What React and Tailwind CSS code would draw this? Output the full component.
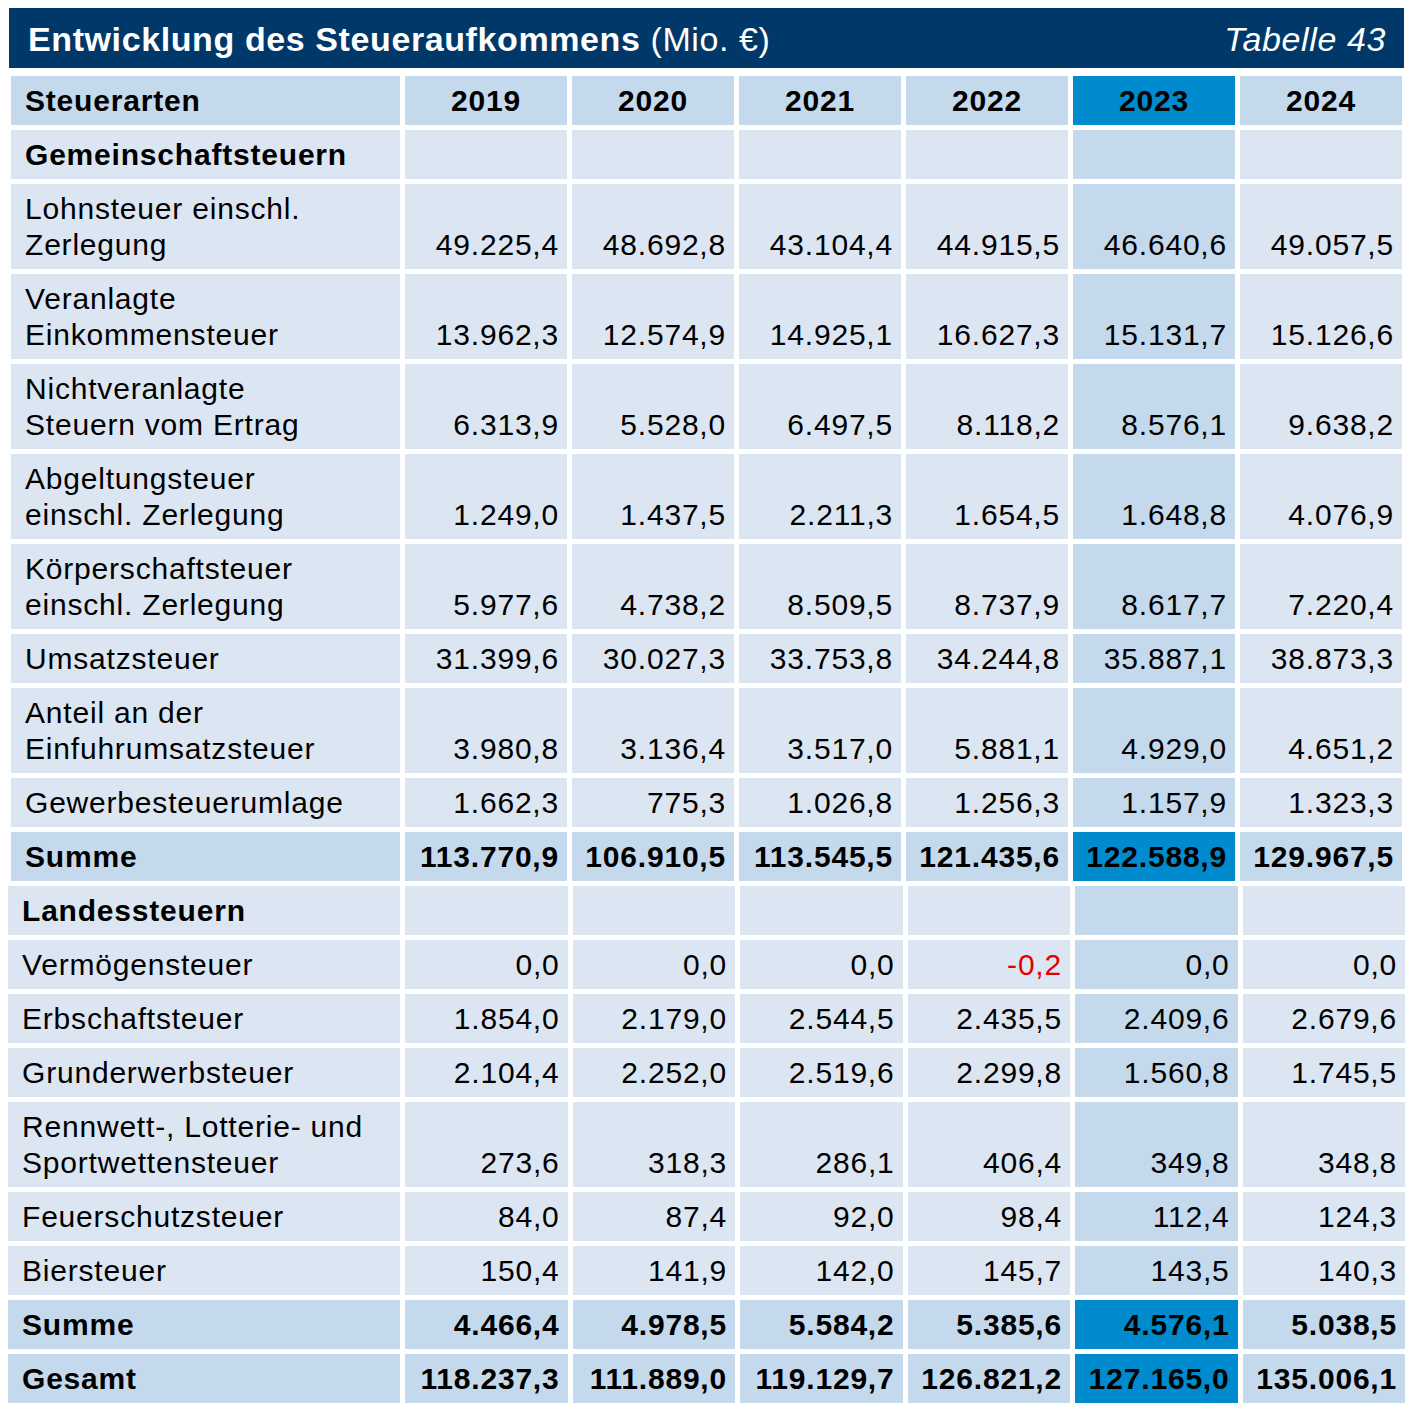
import React from 'react'

const years = ['2019', '2020', '2021', '2022', '2023', '2024']

const upperRows = [
  { label: ['Lohnsteuer einschl.', 'Zerlegung'], values: ['49.225,4', '48.692,8', '43.104,4', '44.915,5', '46.640,6', '49.057,5'] },
  { label: ['Veranlagte', 'Einkommensteuer'], values: ['13.962,3', '12.574,9', '14.925,1', '16.627,3', '15.131,7', '15.126,6'] },
  { label: ['Nichtveranlagte', 'Steuern vom Ertrag'], values: ['6.313,9', '5.528,0', '6.497,5', '8.118,2', '8.576,1', '9.638,2'] },
  { label: ['Abgeltungsteuer', 'einschl. Zerlegung'], values: ['1.249,0', '1.437,5', '2.211,3', '1.654,5', '1.648,8', '4.076,9'] },
  { label: ['Körperschaftsteuer', 'einschl. Zerlegung'], values: ['5.977,6', '4.738,2', '8.509,5', '8.737,9', '8.617,7', '7.220,4'] },
  { label: ['Umsatzsteuer'], values: ['31.399,6', '30.027,3', '33.753,8', '34.244,8', '35.887,1', '38.873,3'] },
  { label: ['Anteil an der', 'Einfuhrumsatzsteuer'], values: ['3.980,8', '3.136,4', '3.517,0', '5.881,1', '4.929,0', '4.651,2'] },
  { label: ['Gewerbesteuerumlage'], values: ['1.662,3', '775,3', '1.026,8', '1.256,3', '1.157,9', '1.323,3'] },
]

const lowerRows = [
  { label: ['Vermögensteuer'], values: ['0,0', '0,0', '0,0', '-0,2', '0,0', '0,0'] },
  { label: ['Erbschaftsteuer'], values: ['1.854,0', '2.179,0', '2.544,5', '2.435,5', '2.409,6', '2.679,6'] },
  { label: ['Grunderwerbsteuer'], values: ['2.104,4', '2.252,0', '2.519,6', '2.299,8', '1.560,8', '1.745,5'] },
  { label: ['Rennwett-, Lotterie- und', 'Sportwettensteuer'], values: ['273,6', '318,3', '286,1', '406,4', '349,8', '348,8'] },
  { label: ['Feuerschutzsteuer'], values: ['84,0', '87,4', '92,0', '98,4', '112,4', '124,3'] },
  { label: ['Biersteuer'], values: ['150,4', '141,9', '142,0', '145,7', '143,5', '140,3'] },
]

const cell = 'flex items-end pb-[6px] leading-[36px]'

// one body row: label cell + six number cells, 2023 column a shade darker
const BodyRow = ({ label, values }) => {
  const h = label.length > 1 ? 'h-[85px]' : 'h-[49px]'
  return (
    <>
      <div className={`${cell} ${h} flex-col items-start justify-end pl-[14px] bg-[#dce6f2]`}>
        {label.map(l => <span key={l}>{l}</span>)}
      </div>
      {values.map((v, i) => (
        <div
          key={i}
          className={`${cell} ${h} justify-end pr-[8px] ${i === 4 ? 'bg-[#c5d9ed]' : 'bg-[#dce6f2]'} ${v.startsWith('-') ? 'text-[#e00000]' : ''}`}
        >
          {v}
        </div>
      ))}
    </>
  )
}

const SumRow = ({ label, values }) => (
  <>
    <div className={`${cell} h-[49px] pl-[14px] font-bold bg-[#c5d9ed]`}>{label}</div>
    {values.map((v, i) => (
      <div
        key={i}
        className={`${cell} h-[49px] justify-end pr-[8px] font-bold ${i === 4 ? 'bg-[#008bcf]' : 'bg-[#c5d9ed]'}`}
      >
        {v}
      </div>
    ))}
  </>
)

const SectionRow = ({ label }) => (
  <>
    <div className={`${cell} h-[49px] pl-[14px] font-bold bg-[#dce6f2]`}>{label}</div>
    {years.map((y, i) => (
      <div key={y} className={`h-[49px] ${i === 4 ? 'bg-[#c5d9ed]' : 'bg-[#dce6f2]'}`} />
    ))}
  </>
)

export default function App() {
  return (
    <div className="w-[1414px] min-h-[1412px] bg-white pt-[8px] font-['Liberation_Sans',Arial,sans-serif] text-[30px] tracking-[0.8px] text-black">
      {/* Title bar */}
      <div className="ml-[9px] w-[1395px] h-[60px] bg-[#003869] text-white flex items-center justify-between pt-[3px] pl-[19px] pr-[18px] text-[34px] tracking-[0.6px]">
        <div>
          <span className="font-bold">Entwicklung des Steueraufkommens</span> (Mio. €)
        </div>
        <span className="italic">Tabelle 43</span>
      </div>

      {/* Gemeinschaftsteuern */}
      <div className="mt-[8px] ml-[11px] w-[1391px] grid grid-cols-[389px_repeat(6,1fr)] gap-[5px]">
        <div className={`${cell} h-[49px] pl-[14px] font-bold bg-[#c5d9ed]`}>Steuerarten</div>
        {years.map((y, i) => (
          <div
            key={y}
            className={`${cell} h-[49px] justify-center font-bold ${i === 4 ? 'bg-[#008bcf]' : 'bg-[#c5d9ed]'}`}
          >
            {y}
          </div>
        ))}
        <SectionRow label="Gemeinschaftsteuern" />
        {upperRows.map(r => <BodyRow key={r.label.join()} {...r} />)}
        <SumRow label="Summe" values={['113.770,9', '106.910,5', '113.545,5', '121.435,6', '122.588,9', '129.967,5']} />
      </div>

      {/* Landessteuern */}
      <div className="mt-[5px] ml-[8px] w-[1397px] grid grid-cols-[392px_repeat(6,1fr)] gap-[5px]">
        <SectionRow label="Landessteuern" />
        {lowerRows.map(r => <BodyRow key={r.label.join()} {...r} />)}
        <SumRow label="Summe" values={['4.466,4', '4.978,5', '5.584,2', '5.385,6', '4.576,1', '5.038,5']} />
        <SumRow label="Gesamt" values={['118.237,3', '111.889,0', '119.129,7', '126.821,2', '127.165,0', '135.006,1']} />
      </div>
    </div>
  )
}
